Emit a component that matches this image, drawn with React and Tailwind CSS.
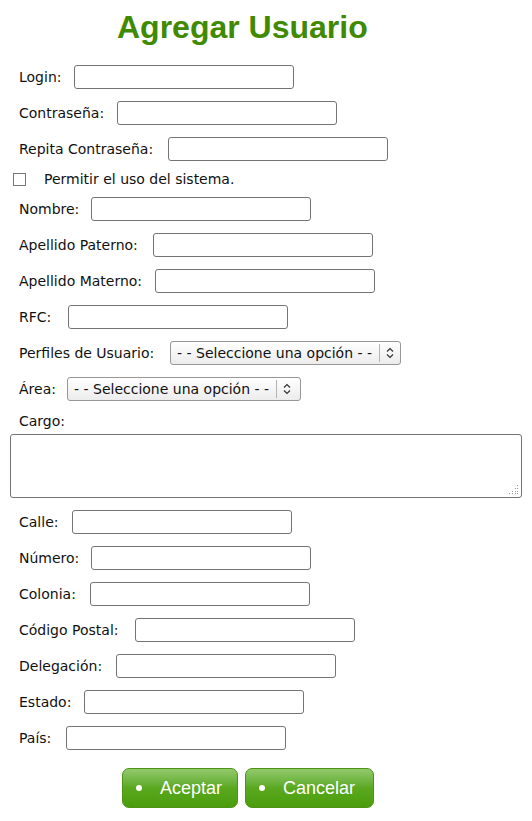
const topFields = [
  { label: 'Login:', lw: 'w-[55px]' },
  { label: 'Contraseña:', lw: 'w-[98px]' },
  { label: 'Repita Contraseña:', lw: 'w-[149px]' },
];

const personFields = [
  { label: 'Nombre:', lw: 'w-[72px]' },
  { label: 'Apellido Paterno:', lw: 'w-[134px]' },
  { label: 'Apellido Materno:', lw: 'w-[136px]' },
  { label: 'RFC:', lw: 'w-[49px]' },
];

const addressFields = [
  { label: 'Calle:', lw: 'w-[53px]' },
  { label: 'Número:', lw: 'w-[72px]' },
  { label: 'Colonia:', lw: 'w-[71px]' },
  { label: 'Código Postal:', lw: 'w-[116px]' },
  { label: 'Delegación:', lw: 'w-[97px]' },
  { label: 'Estado:', lw: 'w-[65px]' },
  { label: 'País:', lw: 'w-[47px]' },
];

function TextRow({ label, lw }) {
  return (
    <div className="flex items-center h-[24px] pl-[9px]">
      <span className={`whitespace-nowrap shrink-0 ${lw}`}>{label}</span>
      <input
        type="text"
        className="w-[220px] h-[24px] border border-[#787373] rounded-[3px] bg-white outline-none"
      />
    </div>
  );
}

function SelectRow({ label, lw, extra }) {
  return (
    <div className="flex items-center h-[24px] pl-[9px]">
      <span className={`whitespace-nowrap shrink-0 ${lw}`}>{label}</span>
      <div className={`flex items-center h-[24px] border border-[#9a9696] rounded-[3px] bg-gradient-to-b from-white to-[#ececec] pl-[6px] ${extra}`}>
        <span className="whitespace-nowrap pr-[7px]">- - Seleccione una opción - -</span>
        <span className="h-[18px] border-l border-[#b5b2b2]"></span>
        <svg className="mx-[6px]" width="8" height="12" viewBox="0 0 8 12" fill="none" stroke="#333" strokeWidth="1.2">
          <path d="M1 4.5 L4 1.5 L7 4.5" />
          <path d="M1 7.5 L4 10.5 L7 7.5" />
        </svg>
      </div>
    </div>
  );
}

function GreenButton({ text, w }) {
  return (
    <button className={`flex items-center h-[40px] pl-[13px] rounded-[7px] border border-[#4d9414] bg-gradient-to-b from-[#93ca6c] via-[#5aa81e] to-[#4a9d0c] text-white text-[18px] font-['Liberation_Sans',Arial,sans-serif] ${w}`}>
      <span className="w-[6px] h-[6px] rounded-full bg-white"></span>
      <span className="ml-[18px]">{text}</span>
    </button>
  );
}

export default function App() {
  return (
    <div className="w-[532px] min-h-[821px] bg-white pl-[10px] font-['DejaVu_Sans',sans-serif] text-[14px] text-[#111]">
      {/* Title */}
      <div className="h-[65px] pt-[9px] pl-[107px]">
        <h1 className="text-[32px] leading-[36px] font-bold text-[#3f8a00] font-['Liberation_Sans',Arial,sans-serif]">
          Agregar Usuario
        </h1>
      </div>

      <div className="flex flex-col gap-[12px]">
        {topFields.map((f, i) => (
          <TextRow key={i} label={f.label} lw={f.lw} />
        ))}

        <div className="flex items-center h-[12px] pl-[3px]">
          <span className="w-[13px] h-[13px] border border-[#767676] bg-white"></span>
          <span className="ml-[18px] whitespace-nowrap">Permitir el uso del sistema.</span>
        </div>

        {personFields.map((f, i) => (
          <TextRow key={i} label={f.label} lw={f.lw} />
        ))}

        <SelectRow label="Perfiles de Usuario:" lw="w-[151px]" extra="" />
        <SelectRow label="Área:" lw="w-[48px]" extra="pr-[3px]" />

        <div>
          <div className="pl-[9px] h-[21px] leading-[17px]">Cargo:</div>
          <div className="relative w-[512px]">
            <textarea className="block w-[512px] h-[64px] border border-[#787373] rounded-[3px] resize-none outline-none"></textarea>
            <svg className="absolute right-[3px] bottom-[3px]" width="10" height="10" viewBox="0 0 10 10" fill="#9a9a9a">
              <rect x="8" y="0" width="1" height="1" />
              <rect x="6" y="3" width="1" height="1" />
              <rect x="8" y="3" width="1" height="1" />
              <rect x="3" y="6" width="1" height="1" />
              <rect x="6" y="6" width="1" height="1" />
              <rect x="8" y="6" width="1" height="1" />
              <rect x="0" y="8" width="1" height="1" />
              <rect x="3" y="8" width="1" height="1" />
              <rect x="6" y="8" width="1" height="1" />
              <rect x="8" y="8" width="1" height="1" />
            </svg>
          </div>
        </div>

        {addressFields.map((f, i) => (
          <TextRow key={i} label={f.label} lw={f.lw} />
        ))}
      </div>

      {/* Buttons */}
      <div className="flex gap-[7px] pl-[112px] pt-[18px]">
        <GreenButton text="Aceptar" w="w-[116px]" />
        <GreenButton text="Cancelar" w="w-[129px]" />
      </div>
    </div>
  );
}
